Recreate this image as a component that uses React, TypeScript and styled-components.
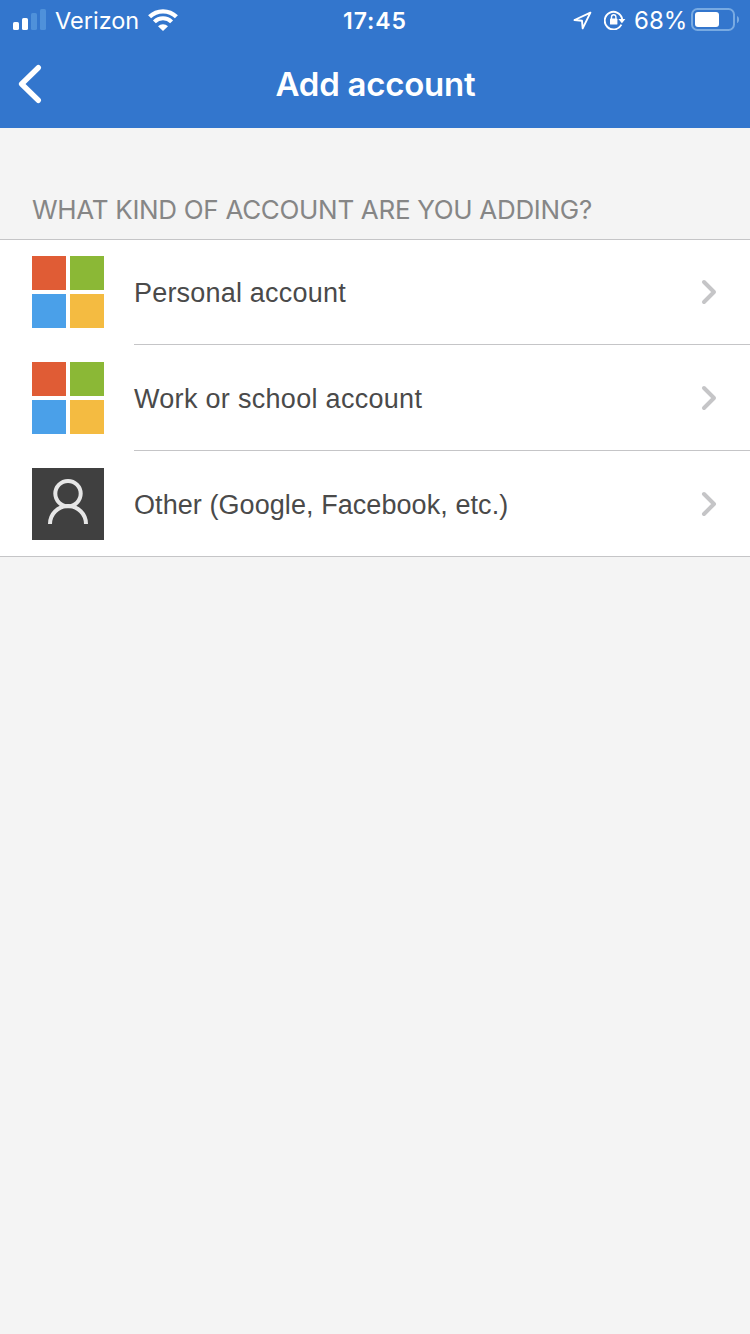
import React from "react";
import styled, { createGlobalStyle } from "styled-components";

const GlobalStyle = createGlobalStyle`
  * { box-sizing: border-box; }
  body { margin: 0; background: #f4f4f4; }
`;

const Screen = styled.main`
  min-height: 1334px;
  background: #f4f4f4;
  font-family: Inter, "Liberation Sans", sans-serif;
`;

const Header = styled.header`
  height: 128px;
  background: #3376cd;
  color: #fff;
`;

const StatusBar = styled.div`
  height: 40px;
  display: grid;
  grid-template-columns: 1fr auto 1fr;
  align-items: center;
  padding: 0 11px 0 13px;
`;

const StatusGroup = styled.div<{ $end?: boolean }>`
  display: flex;
  align-items: center;
  justify-content: ${(p) => (p.$end ? "flex-end" : "flex-start")};
`;

const StatusText = styled.span<{ $size: number; $spacing: number; $weight?: number }>`
  font-size: ${(p) => p.$size}px;
  font-weight: ${(p) => p.$weight ?? 400};
  letter-spacing: ${(p) => p.$spacing}px;
  line-height: 42px;
  height: 40px;
  white-space: nowrap;
`;

const Carrier = styled(StatusText)`
  width: 85px;
  margin: 0 8px 0 8px;
`;

const Clock = styled(StatusText)`
  width: 66px;
`;

const BatteryLevel = styled(StatusText)`
  width: 53px;
  margin: 0 4px 0 8px;
`;

const LocationIcon = styled.svg`
  margin-right: 12px;
`;

const NavBar = styled.div`
  height: 88px;
  display: grid;
  grid-template-columns: 60px 1fr 60px;
  align-items: center;
`;

const BackButton = styled.button`
  height: 88px;
  padding: 0 0 0 16px;
  border: 0;
  background: none;
  display: flex;
  align-items: center;
`;

const Title = styled.h1`
  margin: 0 0 0 1px;
  font-size: 33px;
  font-weight: 600;
  line-height: 88px;
  letter-spacing: -0.25px;
  text-align: center;
`;

const SectionTitle = styled.h2`
  margin: 0;
  height: 111px;
  padding: 62px 0 0 32px;
  font-size: 26px;
  font-weight: 400;
  line-height: 40px;
  letter-spacing: -0.31px;
  color: #868686;
  white-space: nowrap;
`;

const List = styled.ul`
  margin: 0;
  padding: 0;
  list-style: none;
  background: #fff;
  border-top: 1px solid #c5c5c7;
  border-bottom: 1px solid #c5c5c7;
`;

const Row = styled.li`
  height: 106px;
  padding-left: 32px;
  display: flex;
  align-items: flex-end;

  &:first-child,
  &:last-child { height: 105px; }
`;

const IconSlot = styled.div<{ $last?: boolean }>`
  width: 102px;
  height: 72px;
  margin-bottom: ${(p) => (p.$last ? 16 : 17)}px;
`;

const Tiles = styled.div`
  width: 72px;
  height: 72px;
  display: grid;
  grid-template-columns: 34px 34px;
  grid-template-rows: 34px 34px;
  gap: 4px;
`;

const Tile = styled.span<{ $color: string }>`
  background: ${(p) => p.$color};
`;

const Avatar = styled.div`
  width: 72px;
  height: 72px;
  background: #404040;
`;

const RowBody = styled.div<{ $last?: boolean }>`
  flex: 1;
  height: ${(p) => (p.$last ? 105 : 106)}px;
  padding: 0 33px 0 0;
  display: flex;
  align-items: center;
  justify-content: space-between;
  border-bottom: ${(p) => (p.$last ? "0" : "1px solid #c5c5c7")};
`;

const Label = styled.span<{ $spacing: number }>`
  font-family: "Liberation Sans", Arial, sans-serif;
  font-size: 27px;
  line-height: 40px;
  letter-spacing: ${(p) => p.$spacing}px;
  color: #4a4a4a;
  white-space: nowrap;
  padding-top: 2px;
`;

const TILE_COLORS = ["#e05c35", "#8bb836", "#4aa0e9", "#f4bb41"];

const accounts = [
  { label: "Personal account", person: false, spacing: 0.2 },
  { label: "Work or school account", person: false, spacing: 0.3 },
  { label: "Other (Google, Facebook, etc.)", person: true, spacing: 0.07 },
];

const Signal = () => (
  <svg width="34" height="22" viewBox="0 0 34 22" fill="#fff">
    <rect x="0" y="13" width="6" height="8" rx="1.6" />
    <rect x="9" y="9" width="6" height="12" rx="1.6" />
    <g fill="#4f91da">
      <rect x="18" y="4" width="6" height="17" rx="1.6" />
      <rect x="27" y="0" width="6" height="21" rx="1.6" />
    </g>
  </svg>
);

const Wifi = () => (
  <svg width="30" height="22" viewBox="0 0 30 22" fill="none" stroke="#fff">
    <path d="M1.6 7.8A19.2 19.2 0 0 1 28.4 7.8" strokeWidth="4.3" />
    <path d="M6.4 12.9A12.1 12.1 0 0 1 23.6 12.9" strokeWidth="4.1" />
    <path d="M15 22L10 17.2A7.2 7.2 0 0 1 20 17.2Z" fill="#fff" stroke="none" />
  </svg>
);

const Location = () => (
  <LocationIcon width="19" height="19" viewBox="0 0 19 19" fill="none" stroke="#fff" strokeWidth="1.9" strokeLinejoin="round">
    <path d="M17.4 1.6L1.5 9L9 9.8L9.7 17.4Z" />
  </LocationIcon>
);

const RotationLock = () => (
  <svg width="22" height="20" viewBox="0 0 22 20" fill="none" stroke="#fff" strokeWidth="1.9">
    <path d="M17.4 14.6A8.8 8.8 0 1 1 18.2 9.2" />
    <path d="M14.4 9H21.4L17.9 13.2Z" fill="#fff" stroke="none" />
    <rect x="6" y="8.6" width="7.4" height="6" rx="0.7" fill="#fff" stroke="none" />
    <path d="M7.5 9.2V7A2.2 2.2 0 0 1 11.9 7V9.2" strokeWidth="1.4" />
  </svg>
);

const Battery = () => (
  <svg width="48" height="24" viewBox="0 0 48 24" fill="none">
    <rect x="1" y="1" width="42" height="21" rx="5.5" stroke="#78aae2" strokeWidth="2" />
    <rect x="4" y="4" width="24" height="15" rx="3" fill="#fff" />
    <path d="M46 8C48.8 9 48.8 14 46 15Z" fill="#78aae2" />
  </svg>
);

const Chevron = () => (
  <svg width="16" height="26" viewBox="0 0 16 26" fill="none" stroke="#c5c5c7" strokeWidth="4" strokeLinecap="round" strokeLinejoin="round">
    <path d="M3 3L13 13L3 23" />
  </svg>
);

const Person = () => (
  <svg width="72" height="72" viewBox="0 0 72 72" fill="none" stroke="#e6e6e6" strokeWidth="4">
    <circle cx="36" cy="25.6" r="12.7" />
    <path d="M18 56A18 18 0 0 1 54 56" />
  </svg>
);

export default function App() {
  return (
    <Screen>
      <GlobalStyle />
      <Header>
        <StatusBar>
          <StatusGroup>
            <Signal />
            <Carrier $size={23.5} $spacing={0}>Verizon</Carrier>
            <Wifi />
          </StatusGroup>
          <Clock $size={23} $spacing={0.9} $weight={600}>17:45</Clock>
          <StatusGroup $end>
            <Location />
            <RotationLock />
            <BatteryLevel $size={24} $spacing={0}>68%</BatteryLevel>
            <Battery />
          </StatusGroup>
        </StatusBar>
        <NavBar>
          <BackButton aria-label="Back">
            <svg width="28" height="42" viewBox="0 0 28 42" fill="none" stroke="#fff" strokeWidth="5.4" strokeLinecap="round" strokeLinejoin="round">
              <path d="M22.3 4.7L5.6 21L22.3 37.3" />
            </svg>
          </BackButton>
          <Title>Add account</Title>
        </NavBar>
      </Header>
      <SectionTitle>WHAT KIND OF ACCOUNT ARE YOU ADDING?</SectionTitle>
      <List>
        {accounts.map(({ label, person, spacing }) => (
          <Row key={label}>
            <IconSlot $last={person}>
              {person ? (
                <Avatar><Person /></Avatar>
              ) : (
                <Tiles>{TILE_COLORS.map((c) => <Tile key={c} $color={c} />)}</Tiles>
              )}
            </IconSlot>
            <RowBody $last={person}>
              <Label $spacing={spacing}>{label}</Label>
              <Chevron />
            </RowBody>
          </Row>
        ))}
      </List>
    </Screen>
  );
}
